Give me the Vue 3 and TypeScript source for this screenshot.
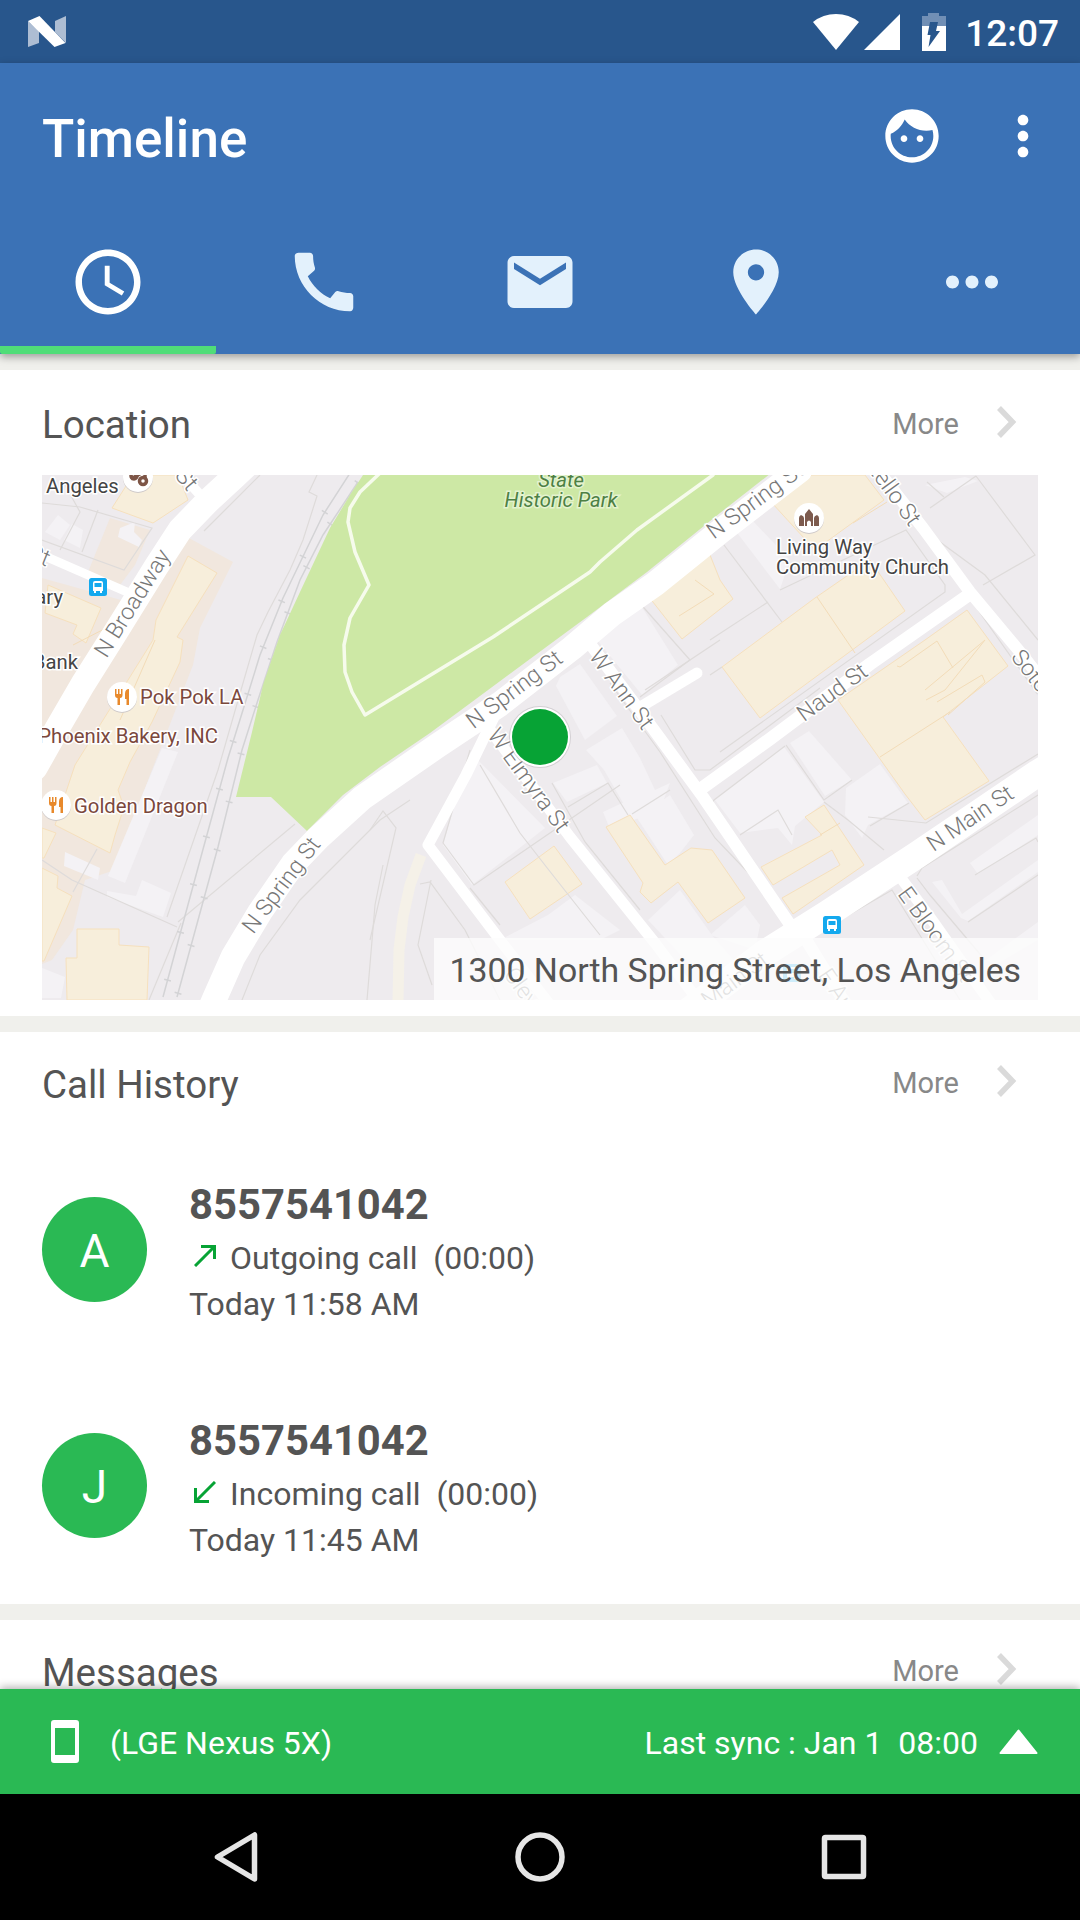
<template>
  <div class="screen">
    <div class="status-bar">
      <svg class="nougat" viewBox="0 0 38 31">
        <path d="M0 5 11 15V27L0 31z" fill="#adbdd3" />
        <path d="M27 5 38 0V27L27 16z" fill="#adbdd3" />
        <path d="M0 5 11.500 0 37.500 27 26.500 31z" fill="#fff" />
      </svg>
      <div class="status-icons">
        <svg width="46" height="36" viewBox="0 0 46 36" fill="#fff">
          <path d="M23 36 0 8Q10 0 23 0t23 8z" />
        </svg>
        <svg class="signal" width="36" height="36" viewBox="0 0 36 36" fill="#fff">
          <path d="M36 0v36H0z" />
        </svg>
        <svg class="battery" width="24" height="38" viewBox="0 0 24 38">
          <path d="M0 3h6V0h11v3h7v10H0z" fill="#718fb5" />
          <path d="M0 13h24v25H0z" fill="#fff" />
          <path d="M8 9h8l-2 9h4L6.500 34l2-12H5.500z" fill="#28568c" />
        </svg>
        <span class="clock">12:07</span>
      </div>
    </div>

    <header class="app-bar">
      <div class="toolbar">
        <h1>Timeline</h1>
        <svg class="tool-icon" viewBox="0 0 24 24"><path :d="icons.face" /></svg>
        <svg class="tool-icon" viewBox="0 0 24 24"><path :d="icons.moreVert" /></svg>
      </div>
      <nav class="tabs">
        <button
          v-for="tab in tabs"
          :key="tab"
          class="tab"
          :class="{ active: tab === activeTab }"
          :aria-label="tab"
          @click="activeTab = tab"
        >
          <svg viewBox="0 0 24 24"><path :d="icons[tab]" /></svg>
        </button>
      </nav>
    </header>

    <main class="content">
      <section class="card location">
        <div class="card-header">
          <h2>Location</h2>
          <span class="more">More</span>
          <svg class="chevron" viewBox="0 0 20 32"><path d="M2 2 15.500 16 2 30" /></svg>
        </div>
        <div class="map">
          <svg class="map-canvas" viewBox="42 475 996 525">
            <rect x="42" y="475" width="996" height="525" fill="#eeebee" />
            <polygon v-for="p in commercial" :key="p" :points="p" fill="#f1e7de" />
            <polygon v-for="p in paleBuildings" :key="p" :points="p" fill="#f4f2f5" />
            <polygon
              v-for="p in buildings"
              :key="p"
              :points="p"
              fill="#f7eedb"
              stroke="#f6e0bd"
            />
            <polyline v-for="p in parcels" :key="p" :points="p" class="parcel" />
            <polyline v-for="p in roofLines" :key="p" :points="p" class="roof" />
            <g v-for="p in rails" :key="p" class="rail">
              <polyline :points="p" />
              <polyline :points="p" class="ties" />
            </g>
            <polygon
              points="363,475 350,495 330,528 300,592 280,635 263,685 252,732 236,797 271,797 307,831 343,795 380,767 430,733 553,642 587,617 647,572 720,513 775,470"
              fill="#cde8a5"
            />
            <polyline
              class="road path"
              points="379,474 360,492 350,508 348,522 355,552 369,585 350,618 344,645 345,672 352,692 365,715 493,637 590,572 600,562 637,530 713,475"
            />
            <polyline
              points="421,855 410,885 403,917 399,950 398,1002"
              fill="none"
              stroke="#f5f1e8"
              stroke-width="11"
            />
            <polyline
              v-for="road in roads"
              :key="road.points"
              class="road"
              :points="road.points"
              :stroke-width="road.width"
            />

            <text
              v-for="(s, i) in streets"
              :key="i"
              class="street"
              :transform="`translate(${s.x} ${s.y}) rotate(${s.angle})`"
              y="8"
            >{{ s.name }}</text>

            <g class="park-name">
              <text x="561" y="487">State</text>
              <text x="561" y="507">Historic Park</text>
            </g>
            <text
              v-for="p in places"
              :key="p.name"
              class="place"
              :class="p.kind"
              :x="p.x"
              :y="p.y"
            >{{ p.name }}</text>

            <g v-for="f in restaurants" :key="f.y" :transform="`translate(${f.x} ${f.y})`">
              <circle cy="1" r="15" fill="#cfcaca" />
              <circle r="15" fill="#fff" />
              <path
                d="M-7-8v6q0 3 2.500 3V8h2.500V1Q0.500 1 0.500-2V-8H-1v5h-1.500v-5h-1.500v5H-5.500v-5zM7-8Q3-8 3-3v5h1.500v6H7z"
                fill="#e8892b"
              />
            </g>
            <g transform="translate(138 477)">
              <circle cy="1" r="15" fill="#cfcaca" />
              <circle r="15" fill="#fff" />
              <g fill="none" stroke="#7d5546" stroke-width="3.500">
                <circle cx="-4" cy="-1" r="3" />
                <circle cx="5" cy="4" r="3.500" />
                <path d="M-7 2 5-5M7-4v6" />
              </g>
            </g>
            <g transform="translate(809 518)">
              <circle cy="1" r="15" fill="#cfcaca" />
              <circle r="15" fill="#fff" />
              <path
                d="M-10 8V0q0-2 2-3 3 1 3 3v8zM10 8V0q0-2-2-3-3 1-3 3v8zM-4 8V-4L0-9 4-4V8H2V4q-2-3-4 0v4z"
                fill="#7d5b4e"
              />
            </g>
            <g v-for="b in busStops" :key="b.x" :transform="`translate(${b.x} ${b.y})`">
              <rect x="-9" y="-9" width="18" height="18" rx="2.500" fill="#14a9ee" />
              <path
                d="M-5-4q0-2 2-2h6q2 0 2 2v8h-1v2h-2V4h-4v2h-2V4h-1zM-3.500-4v4h7v-4z"
                fill="#fff"
                fill-rule="evenodd"
              />
            </g>

            <circle cx="540" cy="737" r="31" fill="#b9b6b9" opacity="0.5" />
            <circle cx="540" cy="737" r="30" fill="#fff" />
            <circle cx="540" cy="737" r="28" fill="#07a335" />
          </svg>
          <div class="address">1300 North Spring Street, Los Angeles</div>
        </div>
      </section>

      <section class="card">
        <div class="card-header">
          <h2>Call History</h2>
          <span class="more">More</span>
          <svg class="chevron" viewBox="0 0 20 32"><path d="M2 2 15.500 16 2 30" /></svg>
        </div>
        <div v-for="call in calls" :key="call.initial" class="call">
          <div class="avatar">{{ call.initial }}</div>
          <div class="call-info">
            <div class="number">{{ call.number }}</div>
            <div class="detail">
              <svg class="arrow" viewBox="0 0 22 22">
                <path v-if="call.outgoing" d="M1 21 20 2M7 1.500h13.500V14" />
                <path v-else d="M21 1 2 20M1.500 7v13.500H15" />
              </svg>
              <span>{{ call.outgoing ? 'Outgoing' : 'Incoming' }} call&nbsp; ({{ call.duration }})</span>
            </div>
            <div class="time">{{ call.time }}</div>
          </div>
        </div>
      </section>

      <section class="card">
        <div class="card-header">
          <h2>Messages</h2>
          <span class="more">More</span>
          <svg class="chevron" viewBox="0 0 20 32"><path d="M2 2 15.500 16 2 30" /></svg>
        </div>
      </section>
    </main>

    <footer class="sync-bar">
      <svg class="device" viewBox="0 0 28 43">
        <path
          d="M3 0h22q3 0 3 3v37q0 3-3 3H3q-3 0-3-3V3Q0 0 3 0zM4 8v27h20V8z"
          fill="#fff"
          fill-rule="evenodd"
        />
      </svg>
      <span class="sync-text">(LGE Nexus 5X)</span>
      <span class="sync-text last-sync">Last sync : Jan 1&nbsp; 08:00</span>
      <svg class="expand" viewBox="0 0 39 25">
        <path d="M19.500 1.500 37.500 24h-36z" fill="#fff" stroke="#fff" stroke-linejoin="round" stroke-width="2" />
      </svg>
    </footer>

    <div class="nav-bar">
      <svg viewBox="0 0 60 60"><path d="M48.500 8v44L11.500 30z" /></svg>
      <svg viewBox="0 0 60 60"><circle cx="30" cy="30" r="22" /></svg>
      <svg viewBox="0 0 60 60"><rect x="10.500" y="10.500" width="39" height="39" rx="1" /></svg>
    </div>
  </div>
</template>

<script setup lang="ts">
import { ref } from 'vue'

type Tab = 'timeline' | 'calls' | 'messages' | 'places' | 'other'

type Call = {
  initial: string
  number: string
  outgoing: boolean
  duration: string
  time: string
}

type Label = { name: string; x: number; y: number }

const tabs: Tab[] = ['timeline', 'calls', 'messages', 'places', 'other']
const activeTab = ref<Tab>('timeline')

const icons: Record<Tab | 'face' | 'moreVert', string> = {
  timeline:
    'M11.99 2C6.47 2 2 6.48 2 12s4.470 10 9.990 10C17.520 22 22 17.520 22 12S17.520 2 11.990 2zM12 20c-4.420 0-8-3.580-8-8s3.580-8 8-8 8 3.580 8 8-3.580 8-8 8zm.5-13H11v6l5.250 3.150.75-1.230-4.500-2.670z',
  calls:
    'M20.010 15.380c-1.230 0-2.420-.2-3.530-.56-.35-.12-.74-.03-1.010.24l-1.570 1.970c-2.830-1.350-5.480-3.900-6.890-6.830l1.950-1.660c.27-.28.35-.67.24-1.020-.37-1.110-.56-2.300-.56-3.530 0-.54-.45-.99-.99-.99H4.190C3.650 3 3 3.240 3 3.990 3 13.280 10.730 21 20.010 21c.71 0 .99-.63.99-1.180v-3.450c0-.54-.45-.99-.99-.99z',
  messages:
    'M20 4H4c-1.100 0-1.990.9-1.990 2L2 18c0 1.100.9 2 2 2h16c1.100 0 2-.9 2-2V6c0-1.100-.9-2-2-2zm0 4l-8 5-8-5V6l8 5 8-5v2z',
  places:
    'M12 2C8.130 2 5 5.130 5 9c0 5.250 7 13 7 13s7-7.750 7-13c0-3.870-3.130-7-7-7zm0 9.500c-1.380 0-2.500-1.120-2.500-2.500s1.120-2.500 2.500-2.500 2.500 1.120 2.500 2.500-1.120 2.500-2.500 2.500z',
  other:
    'M6 10c-1.100 0-2 .9-2 2s.9 2 2 2 2-.9 2-2-.9-2-2-2zm12 0c-1.100 0-2 .9-2 2s.9 2 2 2 2-.9 2-2-.9-2-2-2zm-6 0c-1.100 0-2 .9-2 2s.9 2 2 2 2-.9 2-2-.9-2-2-2z',
  face: 'M9 11.750c-.69 0-1.250.56-1.250 1.250s.56 1.250 1.250 1.250 1.250-.56 1.250-1.250-.56-1.250-1.250-1.250zm6 0c-.69 0-1.250.56-1.250 1.250s.56 1.250 1.250 1.250 1.250-.56 1.250-1.250-.56-1.250-1.250-1.250zM12 2C6.480 2 2 6.480 2 12s4.480 10 10 10 10-4.480 10-10S17.520 2 12 2zm0 18c-4.410 0-8-3.590-8-8 0-.29.02-.58.05-.86 2.360-1.050 4.230-2.980 5.210-5.370C11.070 8.330 14.050 10 17.420 10c.78 0 1.530-.09 2.250-.26.21.71.33 1.470.33 2.260 0 4.410-3.590 8-8 8z',
  moreVert:
    'M12 8c1.100 0 2-.9 2-2s-.9-2-2-2-2 .9-2 2 .9 2 2 2zm0 2c-1.100 0-2 .9-2 2s.9 2 2 2 2-.9 2-2-.9-2-2-2zm0 6c-1.100 0-2 .9-2 2s.9 2 2 2 2-.9 2-2-.9-2-2-2z'
}

const calls: Call[] = [
  { initial: 'A', number: '8557541042', outgoing: true, duration: '00:00', time: 'Today 11:58 AM' },
  { initial: 'J', number: '8557541042', outgoing: false, duration: '00:00', time: 'Today 11:45 AM' }
]

// map layers, bottom to top
const commercial = [
  '110,518 150,530 135,565 120,585 88,572',
  '42,578 128,602 92,665 60,715 42,735',
  '187,537 233,562 200,628 193,665 167,732 150,775 115,870 85,880 73,930 52,960 42,964 42,745 100,660'
]

const paleBuildings = [
  '58,515 70,525 60,540 45,532',
  '72,524 83,530 80,548 64,540',
  '120,528 135,522 134,532 142,540 139,547 118,537',
  '162,748 178,752 125,883 108,876',
  '142,880 171,893 163,917 107,897 107,891 136,896',
  '65,852 100,868 98,880 64,866',
  '42,968 65,977 61,998 42,998',
  '470,752 545,828 472,885 443,845',
  '560,677 580,664 617,716 585,740 556,686',
  '597,640 640,604 678,665 642,695',
  '586,750 622,728 640,758 655,790 670,783 660,810 633,820 604,770',
  '553,783 597,765 607,783 567,802',
  '603,812 633,798 646,815 610,829',
  '637,818 670,795 694,835 680,853 668,865',
  '500,940 548,915 575,895 620,930 600,940',
  '648,920 680,890 712,935 738,965 690,965',
  '715,800 784,747 824,802 795,826 792,845 778,828 740,833',
  '790,743 809,731 852,780 825,796',
  '846,788 880,764 908,803 868,825 862,838 845,815',
  '735,530 750,518 790,560 780,589',
  '970,863 1038,815 1038,835 978,874',
  '932,882 942,880 962,914 1038,860 1038,872 968,921 961,918',
  '925,485 965,477 978,481 947,493',
  '986,960 1038,922 1038,940 995,965',
  '710,935 745,905 760,925 755,950'
]

const buildings = [
  '140,475 178,475 188,500 153,523 112,508 133,475',
  '48,585 101,608 86,643 73,634 77,625 45,613',
  '188,556 217,573 177,637 183,640 180,662 152,722 130,762 118,790 124,807 115,835 110,853 55,825 75,765 153,640 156,620',
  '42,828 56,833 44,858 42,858',
  '42,868 58,876 57,888 72,896 44,961 42,961',
  '77,929 119,929 119,945 149,947 147,1000 67,1000 66,958 77,958',
  '649,597 710,555 720,580 733,599 682,639',
  '772,503 812,475 865,475 884,500 815,550',
  '722,667 815,598 870,560 905,611 760,718',
  '838,700 925,640 967,610 1008,666 943,717 989,781 925,820 905,794',
  '505,882 554,846 582,884 530,919',
  '606,827 630,815 665,865 691,848 712,850 745,898 708,923 678,882 651,903 640,892 643,883',
  '805,817 824,805 864,865 793,914 782,898 840,865 832,850 773,885 761,867 822,835'
]

const parcels = [
  '42,503 80,507 152,528 124,570 42,540',
  '65,485 80,512 60,550',
  '98,510 82,552',
  '204,531 260,475',
  '317,475 309,492 317,496 303,540 290,570 268,612 257,635 241,690 218,770 167,917',
  '42,860 72,880 177,927',
  '97,849 73,892',
  '178,922 295,824',
  '149,1000 181,923',
  '242,1000 260,955 300,900 340,860 380,820 410,800',
  '383,865 375,905 367,1000',
  '370,830 383,811 396,828 370,940',
  '420,884 430,882 465,930 500,1000',
  '431,880 418,945 432,985',
  '470,750 443,843 474,885 620,785',
  '470,888 500,925',
  '480,765 520,833 548,869 600,935',
  '552,783 585,842 640,910',
  '610,683 660,752 715,838 760,885',
  '568,807 608,783 628,815',
  '632,814 670,790',
  '637,600 690,660 640,697',
  '645,690 720,640',
  '661,715 695,770 710,770 820,688',
  '710,807 714,800 785,746',
  '786,745 824,800 852,780',
  '740,835 778,810 792,835',
  '870,826 909,803',
  '824,802 848,820 884,850',
  '724,545 782,622',
  '710,640 768,602',
  '710,675 722,667',
  '780,590 906,530 945,585 945,592 720,752',
  '880,475 910,520 985,575 1038,640',
  '927,482 944,497',
  '976,476 1035,555 983,585',
  '930,508 976,476',
  '978,610 1038,695',
  '868,817 926,823 1038,754',
  '840,920 892,890 960,1000',
  '917,876 922,868 1038,795',
  '917,878 930,895 985,960',
  '968,922 1038,875',
  '975,875 1036,838 1038,842'
]

const roofLines = [
  '817,597 855,653',
  '897,666 900,667 937,641 953,668',
  '925,690 985,640 945,690 926,700',
  '937,702 982,675 985,682 948,715',
  '880,757 950,712',
  '853,523 887,502',
  '112,625 73,645',
  '155,640 120,720',
  '679,616 714,594 695,580',
  '820,835 840,823'
]

const rails = [
  '352,470 323,515 283,598 260,655 243,710 228,758 202,853 163,997',
  '358,482 323,535 300,580 277,642 257,703 242,750 218,847 177,997'
]

const roads = [
  { width: 25, points: '250,462 235,476 207,502 180,530 156,567 117,630 83,684 58,727 35,768' },
  { width: 9, points: '40,554 127,592' },
  { width: 10, points: '178,470 202,497' },
  { width: 25, points: '208,1014 214,1000 233,957 260,912 293,864 318,838 362,798 437,746 500,704 572,648 612,614 655,584 722,530 800,470' },
  { width: 11, points: '495,715 466,775 428,845 503,944 550,1005' },
  { width: 11, points: '488,727 570,837 655,943 700,1003' },
  { width: 12, points: '585,637 643,715 703,797 791,926' },
  { width: 11, points: '642,706 697,673' },
  { width: 13, points: '702,788 770,739 870,664 970,594' },
  { width: 12, points: '862,450 923,528 970,592 1020,652 1048,688' },
  { width: 27, points: '1060,760 1038,773 917,855 827,914 765,953 690,1010' },
  { width: 11, points: '895,870 932,920 992,1005' },
  { width: 12, points: '800,930 845,1003' }
]

const streets: (Label & { angle: number })[] = [
  { name: 'N Broadway', x: 132, y: 603, angle: -58 },
  { name: 'N Spring St', x: 281, y: 885, angle: -53 },
  { name: 'N Spring St', x: 514, y: 689, angle: -37 },
  { name: 'N Spring St', x: 755, y: 500, angle: -36 },
  { name: 'W Ann St', x: 622, y: 689, angle: 54 },
  { name: 'W Elmyra St', x: 529, y: 780, angle: 54 },
  { name: 'Naud St', x: 832, y: 692, angle: -36 },
  { name: 'Sotello St', x: 888, y: 484, angle: 54 },
  { name: 'Sotello St', x: 1046, y: 690, angle: 52 },
  { name: 'N Main St', x: 970, y: 818, angle: -34 },
  { name: 'E Bloom St', x: 936, y: 934, angle: 54 },
  { name: 'N Main St', x: 726, y: 986, angle: -36 },
  { name: 'Cleveland St', x: 546, y: 1020, angle: 54 },
  { name: 'Ct', x: 39, y: 555, angle: 22 },
  { name: 'St', x: 187, y: 479, angle: 50 },
  { name: 'E Ann St', x: 848, y: 1006, angle: 56 }
]

const places: (Label & { kind: string })[] = [
  { name: 'Angeles', x: 46, y: 493, kind: 'plain' },
  { name: 'ary', x: 63, y: 604, kind: 'plain end' },
  { name: 'Bank', x: 78, y: 669, kind: 'plain end' },
  { name: 'Living Way', x: 776, y: 554, kind: 'plain' },
  { name: 'Community Church', x: 776, y: 574, kind: 'plain' },
  { name: 'Pok Pok LA', x: 140, y: 704, kind: 'food' },
  { name: 'Phoenix Bakery, INC', x: 218, y: 743, kind: 'food end' },
  { name: 'Golden Dragon', x: 74, y: 813, kind: 'food' }
]

const restaurants = [
  { x: 122, y: 697 },
  { x: 56, y: 805 }
]

const busStops = [
  { x: 98, y: 587 },
  { x: 832, y: 925 },
  { x: 792, y: 973 }
]
</script>

<style>
body {
  margin: 0;
  overflow: hidden;
}
</style>

<style scoped>
.screen {
  width: 1080px;
  height: 1920px;
  display: flex;
  flex-direction: column;
  overflow: hidden;
  background: #f0f0ec;
  color: #545454;
  font-family: Roboto, sans-serif;
}

.status-bar {
  flex: none;
  height: 63px;
  box-sizing: border-box;
  padding: 0 21px 0 28px;
  display: flex;
  align-items: center;
  justify-content: space-between;
  background: #28568c;
}

.nougat {
  width: 38px;
  height: 31px;
}

.status-icons {
  display: flex;
  align-items: center;
}

.signal {
  margin-left: 5px;
}

.battery {
  margin: 0 19px 0 22px;
}

.clock {
  color: #fff;
  font-size: 37px;
  font-weight: 500;
  line-height: 40px;
  padding-top: 4px;
}

.app-bar {
  flex: none;
  height: 291px;
  display: flex;
  flex-direction: column;
  position: relative;
  z-index: 1;
  background: #3b72b6;
  box-shadow: 0 3px 8px rgba(0, 0, 0, 0.35);
}

.toolbar {
  height: 147px;
  padding: 0 25px 0 42px;
  display: flex;
  align-items: center;
}

.toolbar h1 {
  flex: 1;
  margin: 4px 0 0;
  color: #fff;
  font-size: 53px;
  font-weight: 500;
}

.tool-icon {
  width: 64px;
  height: 64px;
  margin: 0 0 2px 47px;
  fill: #fff;
}

.tabs {
  flex: 1;
  display: grid;
  grid-template-columns: repeat(5, 1fr);
}

.tab {
  display: flex;
  align-items: center;
  justify-content: center;
  padding: 8px 0 0;
  border: none;
  border-bottom: 8px solid transparent;
  background: none;
  fill: #e3f1fc;
  cursor: pointer;
}

.tab.active {
  border-bottom-color: #50dd78;
  border-radius: 0 0 2px 2px;
  fill: #fff;
}

.tab svg {
  width: 78px;
  height: 78px;
}

.content {
  flex: 1;
  min-height: 0;
  overflow: hidden;
  padding-top: 16px;
}

.card {
  margin-bottom: 16px;
  background: #fff;
}

.card-header {
  height: 100px;
  box-sizing: border-box;
  padding: 0 63px 2px 42px;
  display: flex;
  align-items: center;
}

.card-header h2 {
  flex: 1;
  margin: 6px 0 0;
  font-size: 38.5px;
  font-weight: 400;
}

.more {
  margin-top: 4px;
  color: #888;
  font-size: 29px;
}

.chevron {
  width: 20px;
  height: 32px;
  margin-left: 38px;
  fill: none;
  stroke: #dadada;
  stroke-width: 5.5;
}

.location {
  padding-bottom: 16px;
}

.location .card-header {
  height: 105px;
}

.map {
  position: relative;
  height: 525px;
  margin: 0 42px;
  overflow: hidden;
}

.map-canvas {
  display: block;
  width: 996px;
  height: 525px;
}

.parcel {
  fill: none;
  stroke: #dedbda;
  stroke-width: 1.2;
}

.roof {
  fill: none;
  stroke: #f3dcb8;
}

.rail {
  fill: none;
  stroke: #d3d3d5;
  stroke-width: 1.5;
}

.ties {
  stroke-width: 7;
  stroke-dasharray: 1.5 48;
}

.road {
  fill: none;
  stroke: #fff;
  stroke-linecap: round;
  stroke-linejoin: round;
}

.path {
  stroke: #f6fbec;
  stroke-width: 3.5;
}

.street {
  fill: #777;
  stroke: #fff;
  stroke-width: 3;
  paint-order: stroke;
  font-size: 23px;
  font-weight: 300;
  text-anchor: middle;
}

.park-name {
  fill: #4d8044;
  stroke: #e4f3cf;
  stroke-width: 3;
  paint-order: stroke;
  font-size: 20.3px;
  font-style: italic;
  text-anchor: middle;
}

.place {
  stroke: #fff;
  stroke-width: 3;
  paint-order: stroke;
  font-size: 20.3px;
}

.plain {
  fill: #444;
}

.food {
  fill: #7b483d;
}

.end {
  text-anchor: end;
}

.address {
  position: absolute;
  right: 0;
  bottom: 0;
  width: 604px;
  height: 62px;
  box-sizing: border-box;
  padding-right: 17px;
  background: rgba(252, 252, 252, 0.8);
  font-size: 33.8px;
  line-height: 65px;
  text-align: right;
  white-space: nowrap;
}

.call {
  height: 236px;
  box-sizing: border-box;
  padding: 0 42px 2px;
  display: flex;
  align-items: center;
}

.avatar {
  width: 105px;
  height: 105px;
  margin-right: 42px;
  border-radius: 50%;
  background: #2ab954;
  color: #fff;
  font-size: 46px;
  line-height: 109px;
  text-align: center;
}

.call-info {
  padding-top: 4px;
}

.number {
  font-size: 41.8px;
  font-weight: 700;
  line-height: 60px;
}

.detail {
  display: flex;
  align-items: center;
  font-size: 32px;
  line-height: 46px;
}

.arrow {
  width: 22px;
  height: 22px;
  margin: 0 14px 4px 5px;
  fill: none;
  stroke: #07a335;
  stroke-width: 3;
}

.time {
  font-size: 32px;
  line-height: 46px;
}

.sync-bar {
  flex: none;
  height: 105px;
  box-sizing: border-box;
  padding: 0 42px 0 51px;
  display: flex;
  align-items: center;
  position: relative;
  z-index: 1;
  background: #2ab954;
  box-shadow: 0 -2px 8px rgba(0, 0, 0, 0.3);
  color: #fff;
  font-size: 32px;
}

.sync-text {
  padding-top: 3px;
}

.device {
  width: 28px;
  height: 43px;
  margin-right: 31px;
}

.last-sync {
  margin-left: auto;
}

.expand {
  width: 39px;
  height: 25px;
  margin-left: 21px;
}

.nav-bar {
  flex: none;
  height: 126px;
  display: flex;
  align-items: center;
  justify-content: center;
  gap: 244px;
  position: relative;
  z-index: 2;
  background: #000;
}

.nav-bar svg {
  width: 60px;
  height: 60px;
  fill: none;
  stroke: #e6e6e6;
  stroke-width: 5.5;
  stroke-linejoin: round;
}
</style>
